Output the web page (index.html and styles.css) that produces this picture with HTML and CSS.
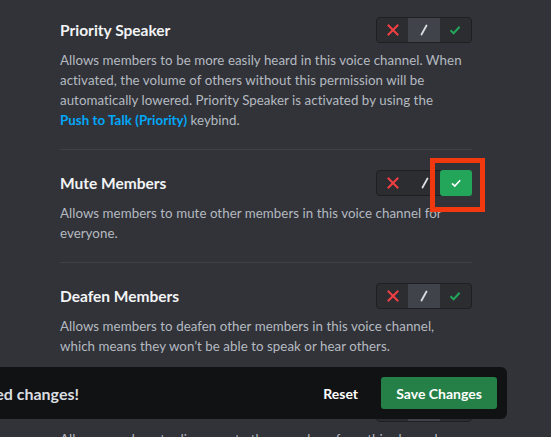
FILE: index.html
```html
<!DOCTYPE html>
<html>
<head>
<meta charset="utf-8">
<link rel="stylesheet" href="styles.css">
</head>
<body>
<div class="page">
  <div class="list">
    <div class="row first">
      <div class="head">
        <div class="title">Priority Speaker</div>
        <div class="toggle">
          <div class="seg"><svg class="ic" viewBox="0 0 12 12"><path d="M1.5 1.5 L10.5 10.5 M10.5 1.5 L1.5 10.5" stroke="#f23f43" stroke-width="2" fill="none" stroke-linecap="square"/></svg></div>
          <div class="seg mid"><svg class="sl" viewBox="0 0 12 12"><path d="M8.5 1.5 L3.5 10.5" stroke="#dbdee1" stroke-width="1.8" stroke-linecap="round" fill="none"/></svg></div>
          <div class="seg"><svg class="ic" viewBox="0 0 12 12"><path d="M1.5 6.2 L4.6 9.2 L10.6 2.8" stroke="#23a55a" stroke-width="2" fill="none"/></svg></div>
        </div>
      </div>
      <p class="desc"><span class="ln">Allows members to be more easily heard in this voice channel. When</span> <span class="ln">activated, the volume of others without this permission will be</span> <span class="ln">automatically lowered. Priority Speaker is activated by using the</span> <span class="ln"><span class="link">Push to Talk (Priority)</span> keybind.</span></p>
    </div>
    <div class="row">
      <div class="head">
        <div class="title">Mute Members</div>
        <div class="toggle">
          <div class="seg"><svg class="ic" viewBox="0 0 12 12"><path d="M1.5 1.5 L10.5 10.5 M10.5 1.5 L1.5 10.5" stroke="#f23f43" stroke-width="2" fill="none" stroke-linecap="square"/></svg></div>
          <div class="seg"><svg class="sl" viewBox="0 0 12 12"><path d="M8.5 1.5 L3.5 10.5" stroke="#dbdee1" stroke-width="1.8" stroke-linecap="round" fill="none"/></svg></div>
          <div class="seg on"><svg class="ic" viewBox="0 0 12 12"><path d="M2 6.4 L4.8 9 L10.2 3.2" stroke="#ffffff" stroke-width="1.6" fill="none"/></svg></div>
          <div class="highlight"></div>
        </div>
      </div>
      <p class="desc"><span class="ln">Allows members to mute other members in this voice channel for</span> <span class="ln">everyone.</span></p>
    </div>
    <div class="row">
      <div class="head">
        <div class="title">Deafen Members</div>
        <div class="toggle">
          <div class="seg"><svg class="ic" viewBox="0 0 12 12"><path d="M1.5 1.5 L10.5 10.5 M10.5 1.5 L1.5 10.5" stroke="#f23f43" stroke-width="2" fill="none" stroke-linecap="square"/></svg></div>
          <div class="seg mid"><svg class="sl" viewBox="0 0 12 12"><path d="M8.5 1.5 L3.5 10.5" stroke="#dbdee1" stroke-width="1.8" stroke-linecap="round" fill="none"/></svg></div>
          <div class="seg"><svg class="ic" viewBox="0 0 12 12"><path d="M1.5 6.2 L4.6 9.2 L10.6 2.8" stroke="#23a55a" stroke-width="2" fill="none"/></svg></div>
        </div>
      </div>
      <p class="desc"><span class="ln">Allows members to deafen other members in this voice channel,</span> <span class="ln">which means they won’t be able to speak or hear others.</span></p>
    </div>
    <div class="row">
      <div class="head">
        <div class="title">Move Members</div>
        <div class="toggle">
          <div class="seg"><svg class="ic" viewBox="0 0 12 12"><path d="M1.5 1.5 L10.5 10.5 M10.5 1.5 L1.5 10.5" stroke="#f23f43" stroke-width="2" fill="none" stroke-linecap="square"/></svg></div>
          <div class="seg mid"><svg class="sl" viewBox="0 0 12 12"><path d="M8.5 1.5 L3.5 10.5" stroke="#dbdee1" stroke-width="1.8" stroke-linecap="round" fill="none"/></svg></div>
          <div class="seg"><svg class="ic" viewBox="0 0 12 12"><path d="M1.5 6.2 L4.6 9.2 L10.6 2.8" stroke="#23a55a" stroke-width="2" fill="none"/></svg></div>
        </div>
      </div>
      <p class="desc"><span class="ln">Allows members to disconnect other members from this channel.</span></p>
    </div>
  </div>
  <div class="notice">
    <div class="msg">Careful — you have unsaved changes!</div>
    <div class="actions">
      <span class="reset">Reset</span>
      <span class="save">Save Changes</span>
    </div>
  </div>
</div>
</body>
</html>
```
FILE: styles.css
```css
html, body {
  margin: 0;
  padding: 0;
  background: #313338;
  overflow: hidden;
}
.page {
  position: relative;
  width: 551px;
  height: 437px;
  overflow: hidden;
  font-family: "Lato", "Noto Sans", sans-serif;
}
.list {
  padding-left: 60px;
  width: 412px;
  margin-top: -4px;
}
.row {
  border-top: 1px solid #3f4147;
  padding: 20px 0 19px;
}
.head {
  display: flex;
  align-items: center;
  justify-content: space-between;
  height: 26px;
}
.title {
  color: #f2f3f5;
  font-size: 15.5px;
  font-weight: 700;
  line-height: 20px;
}
.desc {
  margin: 7px 0 0;
  color: #b5bac1;
  font-size: 13.3px;
  line-height: 20px;
  letter-spacing: 0.05px;
}
.ln {
  display: block;
  white-space: nowrap;
}
.link {
  color: #00a8fc;
  font-weight: 700;
}
.toggle {
  position: relative;
  display: flex;
  width: 96px;
  height: 26px;
  box-sizing: border-box;
  border: 1px solid #1e1f22;
  border-radius: 4px;
  background: #2b2d31;
}
.seg {
  flex: 1;
  display: flex;
  align-items: center;
  justify-content: center;
}
.seg.mid {
  background: #41434a;
}
.seg.on {
  background: #23a55a;
  border-radius: 3px;
  margin: -1px -1px -1px 0;
}
.ic {
  width: 12px;
  height: 12px;
}
.sl {
  width: 12px;
  height: 12px;
}
.highlight {
  position: absolute;
  left: 53px;
  top: -13px;
  width: 55px;
  height: 54px;
  box-sizing: border-box;
  border: 5px solid #f2380f;
}
.notice {
  position: absolute;
  left: -221px;
  right: 44px;
  top: 367px;
  height: 52px;
  box-sizing: border-box;
  background: #111214;
  border-radius: 6px;
  display: flex;
  align-items: center;
  justify-content: space-between;
  padding: 0 10px 0 16px;
}
.msg {
  width: 284px;
  text-align: right;
  white-space: nowrap;
  color: #dbdee1;
  font-size: 16px;
  font-weight: 700;
}
.actions {
  display: flex;
  align-items: center;
  gap: 23px;
}
.reset {
  color: #ffffff;
  font-size: 14px;
  font-weight: 700;
}
.save {
  background: #248046;
  color: #ffffff;
  font-size: 14px;
  font-weight: 700;
  border-radius: 3px;
  width: 116px;
  height: 32px;
  display: flex;
  align-items: center;
  justify-content: center;
}
```
